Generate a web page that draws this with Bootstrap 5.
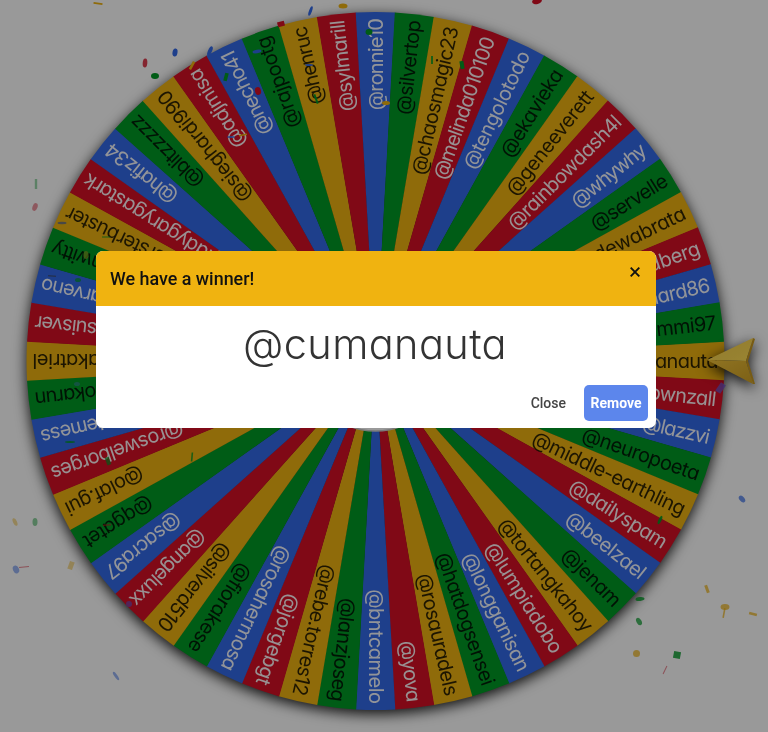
<!DOCTYPE html>
<html lang="en">
<head>
    <meta charset="UTF-8">
    <meta name="viewport" content="width=device-width, initial-scale=1.0">
    <title>Wheel winner</title>
    <link href="https://cdn.jsdelivr.net/npm/bootstrap@5.3.0/dist/css/bootstrap.min.css" rel="stylesheet">
    <style>
        html, body { height: 100%; overflow: hidden; background: #fff; }
        .wheel-stage { width: 768px; height: 732px; }
        .wheel-svg { display: block; width: 768px; height: 732px; }
        .wheel-disc { filter: drop-shadow(0 4px 7px rgba(0, 0, 0, .9)); }
        .wheel-soft { filter: blur(.4px); }
        .slice-name {
            font-family: Inter, "Noto Sans", sans-serif;
            font-feature-settings: "cv11", "ss03";
            font-size: 20px;
            font-weight: 400;
            dominant-baseline: central;
            text-anchor: end;
        }
        .modal-backdrop { --bs-backdrop-opacity: .4; }
        .winner-modal { --bs-modal-width: 560px; padding-right: 16px; }
        .winner-modal .modal-dialog { margin-top: 251px; margin-bottom: 0; }
        .winner-modal .modal-content { border: 0; border-radius: 7px; }
        .winner-head { background: #f0b310; height: 55px; padding: 0 14px; border: 0; border-radius: 7px 7px 0 0; }
        .winner-title { font: 500 17.9px Roboto, sans-serif; color: #111; margin: 0; }
        .winner-x { position: absolute; top: 13.5px; right: 14px; width: 14px; height: 14px; padding: 0; border: 0; background: none; }
        .winner-x svg { display: block; }
        .winner-name {
            font-family: Inter, "Noto Sans", sans-serif;
            font-feature-settings: "cv11", "ss03";
            font-weight: 300; font-size: 41.5px; line-height: 48px; color: #333; letter-spacing: .4px;
            text-align: center; padding: 14px 2px 17px 0;
        }
        .winner-foot { padding: 0 8px 7px; border: 0; gap: 18px; }
        .winner-foot .btn { font: 500 14px Roboto, sans-serif; margin: 0; }
        .btn-close-text { color: #444; padding: 0; border: 0; }
        .btn-remove { background: #5c86ec; color: #fff; border: 0; width: 64px; height: 36px; padding: 0; border-radius: 5px; font-weight: 700 !important; }
    </style>
</head>
<body>
    <div class="wheel-stage">
        <svg class="wheel-svg" id="wheel" viewBox="0 0 768 732" xmlns="http://www.w3.org/2000/svg"></svg>
    </div>

    <div class="modal-backdrop fade show"></div>
    <div class="modal fade show d-block winner-modal" tabindex="-1">
        <div class="modal-dialog">
            <div class="modal-content">
                <div class="modal-header winner-head">
                    <h5 class="winner-title">We have a winner!</h5>
                    <button type="button" class="winner-x" aria-label="Close">
                        <svg width="14" height="14" viewBox="0 0 14 14"><path d="M2.7 2.7l8.6 8.6M11.3 2.7l-8.6 8.6" stroke="#111" stroke-width="1.9" fill="none"/></svg>
                    </button>
                </div>
                <div class="modal-body p-0">
                    <div class="winner-name">@cumanauta</div>
                </div>
                <div class="modal-footer winner-foot">
                    <button type="button" class="btn btn-close-text">Close</button>
                    <button type="button" class="btn btn-remove">Remove</button>
                </div>
            </div>
        </div>
    </div>

    <script src="https://cdn.jsdelivr.net/npm/bootstrap@5.3.0/dist/js/bootstrap.bundle.min.js"></script>
    <script>
        const names = ['@cumanauta','@shownzall','@lazzvi','@neuropoeta','@middle-earthling','@dailyspam','@beelzael','@jenam',
            '@tortangkahoy','@lumpiadobo','@longganisan','@hatdogsensei','@rosauradels','@yova','@bntcamelo','@lanzjoseg',
            '@rebe.torres12','@jorgebgt','@rosahermosa','@fiorakese','@silverd510','@angeluxx','@sacra97','@qgatet',
            '@olaf.gui','@roswelborges','@artemess','@mokarun','@akatriel','@jesuisver','@marveno','@mwitty',
            '@mistersterbuster','@ladygarygastark','@hafiz34','@blitzzzzz','@sieghardi990','@adjmisa','@necho41','@rajpootg',
            '@henruc','@sylmarill','@ronnie10','@silvertop','@chaosmagic23','@melinda010100','@tengolotodo','@ekavieka',
            '@geneeverett','@rainbowdash4l','@whywhy','@servelle','@dewabrata','@goldberg','@richard86','@summi97'];
        const colors = ['#eeb211', '#d50f25', '#3369e8', '#009925'];
        const cx = 375.5, cy = 361, r = 349;
        const step = 360 / names.length;

        // rough advance widths of the wheel font, in em
        const adv = {a:.62,b:.62,c:.53,d:.62,e:.58,f:.32,g:.61,h:.56,i:.24,j:.24,k:.51,l:.24,m:.86,n:.56,o:.59,p:.62,q:.62,r:.35,s:.46,t:.33,u:.56,v:.5,w:.77,x:.49,y:.5,z:.49,'@':.95,'1':.3,'.':.22,'-':.4};
        const textLen = s => [...s].reduce((sum, c) => sum + (adv[c] ?? .6), 0) * 19.5;

        const pt = (deg, rad) => {
            const a = deg * Math.PI / 180;
            return (cx + rad * Math.cos(a)).toFixed(2) + ' ' + (cy + rad * Math.sin(a)).toFixed(2);
        };

        let slices = '', labels = '';
        names.forEach((name, i) => {
            const mid = i * step;
            const color = colors[i % 4];
            slices += `<path d="M${cx} ${cy}L${pt(mid - step / 2 - .04, r)}A${r} ${r} 0 0 1 ${pt(mid + step / 2 + .04, r)}Z" fill="${color}"/>`;
            const ink = (i % 4 === 1 || i % 4 === 2) ? 'rgba(255,255,255,.95)' : 'rgba(0,0,0,.8)';
            labels += `<text class="slice-name" transform="rotate(${mid.toFixed(3)} ${cx} ${cy})" x="${cx + 343}" y="${cy}" fill="${ink}" textLength="${textLen(name).toFixed(1)}" lengthAdjust="spacing">${name}</text>`;
        });

        // confetti: [x, y, half width, half height, rotation, colour, kind, opacity]
        const Y = '#eeb211', R = '#d50f25', B = '#3369e8', G = '#009925';
        const confetti = [
            [98,3.5,4.5,1,8,Y,'r',1],[343,6,4.5,2.5,0,Y,'e',1],[310.5,11,1.5,5,20,B,'e',1],[281,24,3.5,2.5,-15,R,'r',1],
            [175,52.5,2.5,4,10,B,'e',1],[145,63,2.3,4.5,5,R,'e',.8],[155,76,4,3,0,G,'e',1],[210,51,2,5,25,B,'e',1],
            [192,65.5,1.3,4.5,28,Y,'r',1],[36,184,1.2,5,0,G,'r',.4],[35,207,2.5,4,20,R,'e',.45],[369,32,3.5,3,0,G,'e',1],
            [226,77,1.8,4,15,G,'r',1],[258,91,3,4,-15,R,'e',1],[257,51.5,4.5,1.8,-8,B,'e',1],[309,65,4,1,0,B,'e',1],
            [316,99,1,5,-20,G,'r',1],[231,137,4,1,0,B,'e',.8],[243,135,4,.8,-10,Y,'r',1],[62,223,4.5,1.2,0,'#5a6a90','e',.8],
            [106,237,4,.5,0,G,'r',.8],[86,255,2.5,4,0,'#7a9a20','e',.8],[78,280,3,2,0,G,'e',.7],[52,276,4,.5,5,'#444','r',.8],
            [77,384,3,2,0,'#2a8a80','e',.8],[70,442,5,1,0,G,'e',.8],[537,1,5,3,-15,R,'e',1],[432,60,.8,4,0,G,'r',1],
            [462,65,2,4,-10,G,'r',1],[386,103,4,2,0,Y,'e',1],[15,522,2,4,-25,Y,'e',.45],[35,522,2.5,4,0,G,'e',.45],
            [16,569.5,3,4,-25,B,'e',.5],[24,567,5,.5,-5,R,'r',.5],[71,565.5,2.5,4,20,Y,'r',.45],[116,676,1.5,5,-35,B,'e',.5],
            [192,457,.8,4.5,5,G,'r',.8],[108,461,2,4,-20,G,'r',.7],[129,604,3,3,0,'#6a50c0','e',.7],[107,525,4,.5,-5,R,'r',.8],
            [742,499,2.5,4,-40,B,'e',.7],[707,589,1.5,4,-20,Y,'r',.7],[725,607,4.5,3,0,Y,'e',.7],[724,613,.8,5,10,Y,'r',.7],
            [753,614,4,1.3,15,Y,'r',.7],[640,599,4.5,2,-5,G,'e',.8],[639,621.5,2.5,4,-30,G,'e',.7],[636.5,653.5,3.5,3.5,0,Y,'e',.7],
            [677,655,3.5,3.5,10,G,'r',.8],[665,670,.5,4.5,25,R,'r',.5],[660,520,1.5,4.5,25,G,'e',.9],[720.6,388,3,5,35,'#6a50c0','r',.8]
        ];
        const bits = confetti.map(([x, y, w, h, rot, c, kind, op]) => {
            const shape = kind === 'e'
                ? `<ellipse rx="${w}" ry="${h}" fill="${c}"/>`
                : `<rect x="${-w}" y="${-h}" width="${w * 2}" height="${h * 2}" fill="${c}"/>`;
            return `<g transform="translate(${x} ${y}) rotate(${rot})" opacity="${op}">${shape}</g>`;
        }).join('');

        document.getElementById('wheel').innerHTML = `
            <defs>
                <linearGradient id="arrowTop" x1="0" y1="0" x2="1" y2="1">
                    <stop offset="0" stop-color="#f4cd4a"/><stop offset="1" stop-color="#ffdd55"/>
                </linearGradient>
                <linearGradient id="arrowLow" x1="0" y1="0" x2="1" y2="1">
                    <stop offset="0" stop-color="#f0c23a"/><stop offset="1" stop-color="#cfa024"/>
                </linearGradient>
            </defs>
            <g class="wheel-disc">${slices}</g>
            <g class="wheel-soft">${labels}</g>
            <circle cx="${cx}" cy="${cy}" r="70" fill="#fff" stroke="#ccc" stroke-width="1.5"/>
            <g class="wheel-disc">
                <path d="M707 360L753 338L746 361Z" fill="url(#arrowTop)"/>
                <path d="M707 360L746 361L753 384Z" fill="url(#arrowLow)"/>
                <path d="M753 338L755 339L748 361L755 384L753 384L746 361Z" fill="#c8981e"/>
            </g>
            ${bits}`;
    </script>
</body>
</html>
